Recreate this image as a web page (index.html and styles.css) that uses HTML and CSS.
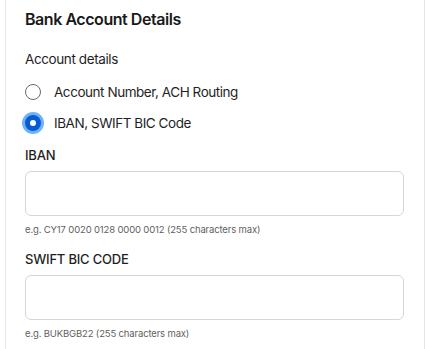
FILE: index.html
```html
<!DOCTYPE html>
<html lang="en">
<head>
<meta charset="utf-8">
<link rel="stylesheet" href="styles.css">
</head>
<body>
<div class="card">
  <h2 class="title">Bank Account Details</h2>
  <div class="group-label">Account details</div>
  <div class="radios">
    <label class="radio-row">
      <span class="radio"></span>
      <span class="radio-text">Account Number, ACH Routing</span>
    </label>
    <label class="radio-row">
      <span class="radio checked"><span class="dot"></span></span>
      <span class="radio-text">IBAN, SWIFT BIC Code</span>
    </label>
  </div>
  <div class="field field-first">
    <div class="field-label">IBAN</div>
    <div class="input"></div>
    <div class="help">e.g. CY17 0020 0128 0000 0012 (255 characters max)</div>
  </div>
  <div class="field">
    <div class="field-label">SWIFT BIC CODE</div>
    <div class="input"></div>
    <div class="help">e.g. BUKBGB22 (255 characters max)</div>
  </div>
</div>
</body>
</html>
```
FILE: styles.css
```css
html, body {
  margin: 0;
  padding: 0;
  background: #ffffff;
}
body {
  font-family: Inter, "Liberation Sans", sans-serif;
  color: #1f1f1f;
  overflow: hidden;
}
.card {
  margin-left: 5px;
  width: 420px;
  border-left: 1px solid #e6e6e6;
  border-right: 1px solid #e6e6e6;
  padding: 9px 19px 20px 19px;
  box-sizing: border-box;
  min-height: 360px;
  display: flex;
  flex-direction: column;
}
.title {
  margin: 0;
  font-size: 16px;
  line-height: 20px;
  font-weight: 600;
  letter-spacing: -0.45px;
  color: #1a1a1a;
}
.group-label {
  margin-top: 19.5px;
  font-size: 13.5px;
  line-height: 20px;
  font-weight: 400;
  letter-spacing: -0.4px;
}
.radios {
  margin-top: 12px;
  display: flex;
  flex-direction: column;
  gap: 9.5px;
}
.radio-row {
  display: flex;
  align-items: center;
  height: 22px;
  gap: 13px;
}
.radio {
  width: 16px;
  height: 16px;
  box-sizing: border-box;
  border: 1px solid #6b6b6b;
  border-radius: 50%;
  display: flex;
  align-items: center;
  justify-content: center;
  flex: none;
}
.radio.checked {
  border: none;
  background: #0a5bd3;
  box-shadow: 0 0 0 3px #6db3f8;
}
.dot {
  width: 6px;
  height: 6px;
  border-radius: 50%;
  background: #ffffff;
}
.radio-text {
  font-size: 13.5px;
  line-height: 20px;
  letter-spacing: -0.45px;
}
.field {
  display: flex;
  flex-direction: column;
  margin-top: 12.5px;
}
.field-first {
  margin-top: 11.5px;
}
.field-label {
  font-size: 13px;
  line-height: 18px;
  font-weight: 500;
  letter-spacing: -0.2px;
}
.input {
  margin-top: 7.5px;
  height: 45px;
  box-sizing: border-box;
  border: 1px solid #d6d6d6;
  border-radius: 6px;
  width: 379px;
}
.help {
  margin-top: 7px;
  font-size: 9.5px;
  line-height: 14px;
  letter-spacing: -0.15px;
  color: #5f5f5f;
}
```
